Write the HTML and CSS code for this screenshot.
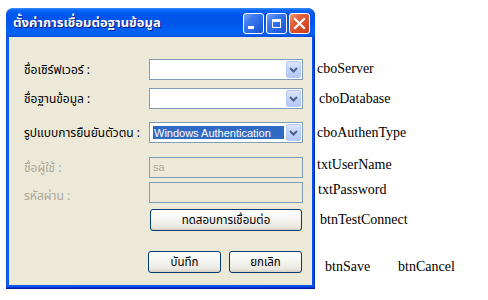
FILE: index.html
```html
<!DOCTYPE html>
<html lang="th">
<head>
<meta charset="utf-8">
<title>ตั้งค่าการเชื่อมต่อฐานข้อมูล</title>
<link rel="stylesheet" href="styles.css">
</head>
<body>
<div class="page">
  <div class="window">
    <div class="titlebar">
      <span class="title">ตั้งค่าการเชื่อมต่อฐานข้อมูล</span>
      <div class="controls">
        <span class="cbtn cbtn-min"><span class="min-bar"></span></span>
        <span class="cbtn cbtn-max"><span class="max-box"></span></span>
        <span class="cbtn cbtn-close">
          <svg width="13" height="13" viewBox="0 0 13 13"><path d="M2 2 L11 11 M11 2 L2 11" stroke="#fff" stroke-width="2.2" stroke-linecap="square"/></svg>
        </span>
      </div>
    </div>
    <div class="client">
      <div class="row r1">
        <span class="lbl">ชื่อเซิร์ฟเวอร์ :</span>
        <div class="combo"><span class="combo-text"></span><span class="drop"><svg width="9" height="6" viewBox="0 0 9 6"><path d="M1 1 L4.5 4.5 L8 1" fill="none" stroke="#4D6185" stroke-width="2"/></svg></span></div>
      </div>
      <div class="row r2">
        <span class="lbl">ชื่อฐานข้อมูล :</span>
        <div class="combo"><span class="combo-text"></span><span class="drop"><svg width="9" height="6" viewBox="0 0 9 6"><path d="M1 1 L4.5 4.5 L8 1" fill="none" stroke="#4D6185" stroke-width="2"/></svg></span></div>
      </div>
      <div class="row r3">
        <span class="lbl">รูปแบบการยืนยันตัวตน :</span>
        <div class="combo"><span class="combo-text selected">Windows Authentication</span><span class="drop"><svg width="9" height="6" viewBox="0 0 9 6"><path d="M1 1 L4.5 4.5 L8 1" fill="none" stroke="#4D6185" stroke-width="2"/></svg></span></div>
      </div>
      <div class="row r4">
        <span class="lbl disabled">ชื่อผู้ใช้ :</span>
        <div class="textbox">sa</div>
      </div>
      <div class="row r5">
        <span class="lbl disabled lbl-low">รหัสผ่าน :</span>
        <div class="textbox"></div>
      </div>
      <div class="row r6">
        <span class="lbl"></span>
        <button class="xpbtn btn-wide" type="button">ทดสอบการเชื่อมต่อ</button>
      </div>
      <div class="row r7">
        <span class="lbl lbl-short"></span>
        <button class="xpbtn btn-half" type="button">บันทึก</button>
        <button class="xpbtn btn-half" type="button">ยกเลิก</button>
      </div>
    </div>
  </div>
  <div class="notes">
    <div class="note n1">cboServer</div>
    <div class="note n2">cboDatabase</div>
    <div class="note n3">cboAuthenType</div>
    <div class="note n4">txtUserName</div>
    <div class="note n5">txtPassword</div>
    <div class="note n6">btnTestConnect</div>
    <div class="note n7"><span>btnSave</span><span>btnCancel</span></div>
  </div>
</div>
</body>
</html>
```
FILE: styles.css
```css
html, body {
  margin: 0;
  padding: 0;
  background: #ffffff;
}

.page {
  display: flex;
  align-items: flex-start;
  padding: 8px 0 0 6px;
}

.window {
  width: 309px;
  height: 281px;
  box-sizing: border-box;
  display: flex;
  flex-direction: column;
  border-radius: 8px 8px 0 0;
  background: linear-gradient(90deg, #0831D9 0, #166AEE 1px, #0B5AE8 2px, #0B55E6 calc(100% - 2px), #0A3ED7 calc(100% - 1px), #001EA0 100%);
  padding: 0 3px 4px 3px;
  box-shadow: inset 0 -1px 0 #001EA0, inset 0 -2px 0 #0831D9;
}

.titlebar {
  height: 29px;
  margin: 0 -3px;
  border-radius: 7px 7px 0 0;
  background: linear-gradient(180deg, #3C8FFA 0, #0A68F5 2px, #0058EE 6px, #0054E8 14px, #0062F8 24px, #0A5CEE 27px, #0048D8 29px);
  display: flex;
  align-items: flex-start;
  padding: 5px 5px 0 7px;
  box-sizing: border-box;
}

.title {
  flex: 1;
  color: #ffffff;
  font-family: Tahoma, "Noto Sans Thai", "Noto Sans", "DejaVu Sans", sans-serif;
  font-weight: bold;
  font-size: 13px;
  line-height: 20px;
  text-shadow: 1px 1px 0 #0A1883;
  white-space: nowrap;
}

.controls {
  display: flex;
  gap: 2px;
}

.cbtn {
  width: 21px;
  height: 21px;
  box-sizing: border-box;
  border: 1px solid #ffffff;
  border-radius: 3px;
  display: flex;
  align-items: center;
  justify-content: center;
  background: linear-gradient(135deg, #7DA6F6 0, #3F7CF0 30%, #2663E0 70%, #1E50C8 100%);
}

.cbtn-close {
  background: linear-gradient(135deg, #F0A080 0, #E2643F 30%, #D84A25 70%, #C23C18 100%);
}

.min-bar {
  width: 6px;
  height: 3px;
  background: #ffffff;
  margin: 8px 5px 0 0;
}

.max-box {
  width: 9px;
  height: 9px;
  box-sizing: border-box;
  border: 1px solid #ffffff;
  border-top-width: 3px;
}

.client {
  flex: 1;
  background: #ECE9D8;
  padding: 22px 0 0 15px;
  display: flex;
  flex-direction: column;
  font-family: Tahoma, "Noto Sans Thai", "Noto Sans", "DejaVu Sans", sans-serif;
  font-size: 12px;
}

.row {
  display: flex;
  align-items: center;
  height: 21px;
}

.r2 { margin-top: 8px; }
.r3 { margin-top: 13px; }
.r4 { margin-top: 14px; }
.r5 { margin-top: 4px; }
.r6 { margin-top: 6px; height: 22px; }
.r7 { margin-top: 20px; height: 22px; }

.lbl {
  width: 125px;
  flex: none;
  color: #000000;
  white-space: nowrap;
}

.lbl-short { width: 124px; }

.lbl.disabled { color: #ACA899; }

.lbl-low { padding-top: 7px; }

.combo {
  width: 154px;
  height: 21px;
  box-sizing: border-box;
  border: 1px solid #7F9DB9;
  background: #ffffff;
  display: flex;
  align-items: stretch;
  padding: 1px;
}

.combo-text {
  flex: 1;
  margin: 2px;
  font-family: Tahoma, "Liberation Sans", Arial, sans-serif;
  font-size: 11px;
  line-height: 15px;
  padding-left: 1px;
  white-space: nowrap;
}

.combo-text.selected {
  background: #316AC5;
  color: #ffffff;
}

.drop {
  width: 15px;
  flex: none;
  box-sizing: border-box;
  border: 1px solid #B5C8F3;
  border-radius: 2px;
  background: linear-gradient(180deg, #DCE6FD 0, #C3D5FD 50%, #B3C7F8 100%);
  display: flex;
  align-items: center;
  justify-content: center;
}

.textbox {
  width: 154px;
  height: 21px;
  box-sizing: border-box;
  border: 1px solid #7F9DB9;
  background: #ECE9D8;
  color: #ACA899;
  font-family: Tahoma, "Liberation Sans", Arial, sans-serif;
  font-size: 11px;
  line-height: 19px;
  padding-left: 3px;
}

.xpbtn {
  height: 22px;
  box-sizing: border-box;
  border: 1px solid #003C74;
  border-radius: 3px;
  background: linear-gradient(180deg, #FFFFFF 0, #F6F6F3 40%, #EAE8E0 85%, #D6D0C5 100%);
  font-family: Tahoma, "Noto Sans Thai", "Noto Sans", "DejaVu Sans", sans-serif;
  font-size: 11.5px;
  color: #000000;
  padding: 0;
  margin: 0;
}

.btn-wide {
  width: 152px;
  margin-left: 1px;
}

.btn-half {
  width: 73px;
}

.btn-half + .btn-half {
  margin-left: 8px;
}

.notes {
  display: flex;
  flex-direction: column;
  padding-top: 53px;
  margin-left: 2px;
  font-family: "Liberation Serif", "Times New Roman", serif;
  font-size: 14px;
  line-height: 16px;
  color: #000000;
}

.note { white-space: nowrap; }
.n2 { margin-top: 14px; margin-left: 2px; }
.n3 { margin-top: 18px; }
.n4 { margin-top: 16px; }
.n5 { margin-top: 9px; margin-left: 1px; }
.n6 { margin-top: 14px; margin-left: 3px; }
.n7 { margin-top: 31px; margin-left: 8px; display: flex; gap: 28px; }
```
